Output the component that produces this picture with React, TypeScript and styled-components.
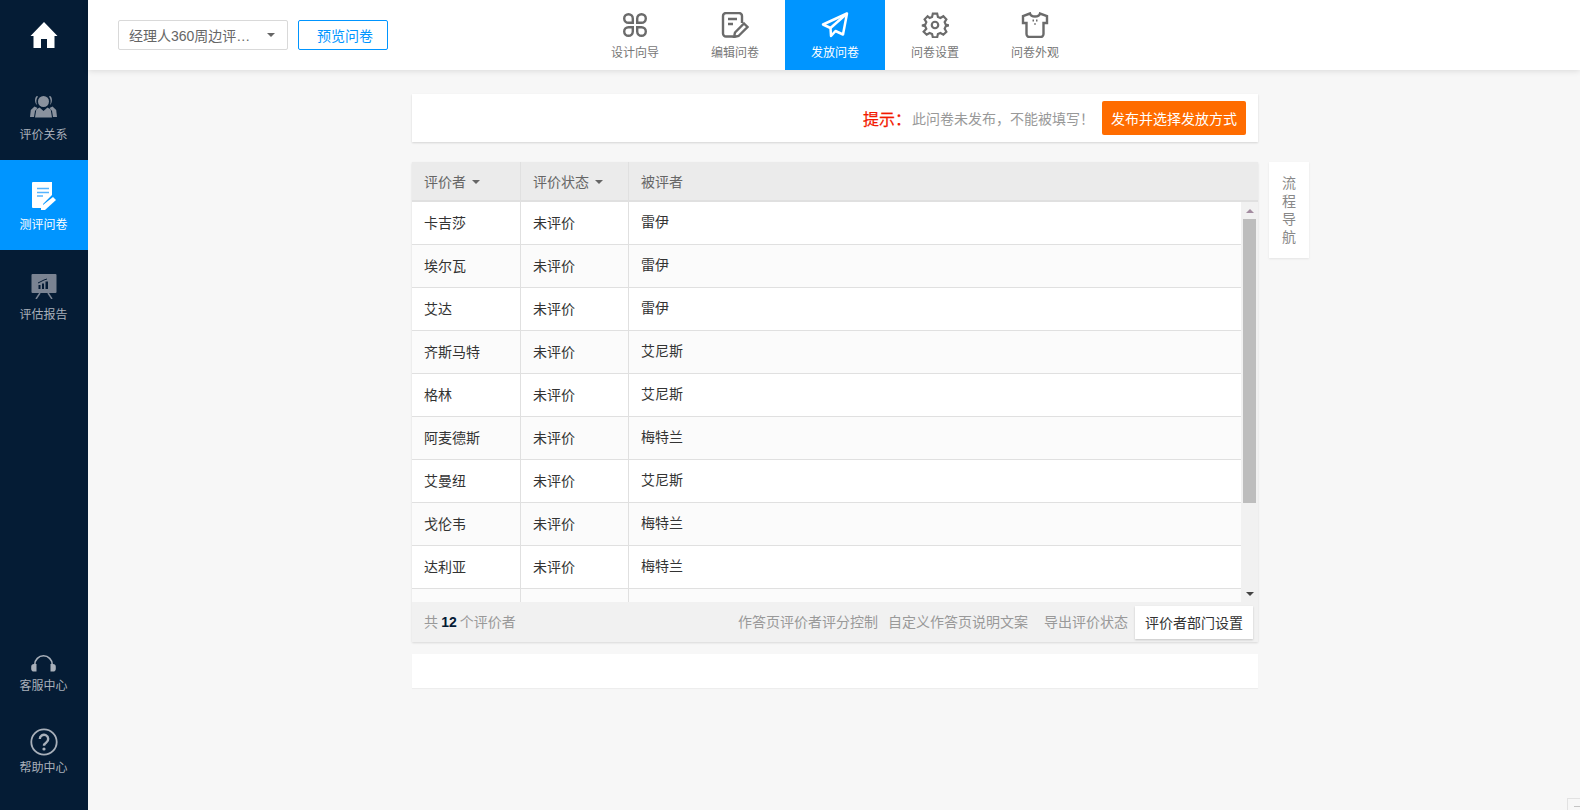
import React from "react";
import styled, { createGlobalStyle } from "styled-components";

const Global = createGlobalStyle`
  html, body { margin: 0; padding: 0; }
  body {
    background: #f7f7f7;
    font-family: "Noto Sans CJK SC", "Liberation Sans", sans-serif;
    overflow: hidden;
  }
  * { box-sizing: border-box; }
`;

const Page = styled.div`
  display: flex;
  width: 1580px;
  height: 810px;
  position: relative;
  overflow: hidden;
`;

const Sidebar = styled.aside`
  width: 88px;
  flex: none;
  height: 100%;
  background: #051c35;
  display: flex;
  flex-direction: column;
`;

const HomeLink = styled.div`
  height: 70px;
  display: flex;
  align-items: center;
  justify-content: center;
`;

const SideItem = styled.div<{ $active?: boolean }>`
  height: 90px;
  display: flex;
  flex-direction: column;
  align-items: center;
  padding: 18px 1px 0 0;
  gap: 1px;
  font-size: 12px;
  line-height: 18px;
  color: ${(p) => (p.$active ? "#fff" : "#a9b0ba")};
  background: ${(p) => (p.$active ? "#0095ff" : "transparent")};
`;

const IconSlot = styled.div`
  height: 36px;
  display: flex;
  align-items: center;
  justify-content: center;
  svg { display: block; }
`;

const SideSpacer = styled.div`
  flex: 1;
`;

const SideBottom = styled.div<{ $height: number; $gap: number }>`
  height: ${(p) => p.$height}px;
  display: flex;
  flex-direction: column;
  align-items: center;
  gap: ${(p) => p.$gap}px;
  padding-right: 1px;
  font-size: 12px;
  line-height: 18px;
  color: #a9b0ba;
  svg { display: block; }
`;

const Main = styled.div`
  flex: 1;
  display: flex;
  flex-direction: column;
  min-width: 0;
`;

const TopBar = styled.header`
  height: 70px;
  flex: none;
  background: #fff;
  box-shadow: 0 1px 6px rgba(0, 0, 0, 0.12);
  display: flex;
  align-items: center;
  padding-left: 30px;
  position: relative;
`;

const SelectBox = styled.div`
  width: 170px;
  height: 30px;
  border: 1px solid #d9d9d9;
  border-radius: 2px;
  display: flex;
  align-items: center;
  padding: 0 12px 0 10px;
  font-family: "Liberation Sans", "Noto Sans CJK SC", sans-serif;
  font-size: 14px;
  color: #666;
  justify-content: space-between;
`;

const Caret = styled.i<{ $color?: string; $size?: number }>`
  display: inline-block;
  width: 0;
  height: 0;
  border-left: ${(p) => p.$size ?? 4}px solid transparent;
  border-right: ${(p) => p.$size ?? 4}px solid transparent;
  border-top: ${(p) => p.$size ?? 4}px solid ${(p) => p.$color ?? "#666"};
`;

const PreviewButton = styled.button`
  width: 90px;
  height: 30px;
  margin-left: 10px;
  border: 1px solid #0095ff;
  border-radius: 2px;
  background: #fff;
  color: #0095ff;
  font: inherit;
  font-size: 14px;
  padding: 0 0 0 4px;
`;

const StepNav = styled.nav`
  display: flex;
  margin-left: 197px;
  height: 70px;
`;

const Step = styled.div<{ $active?: boolean }>`
  width: 100px;
  height: 70px;
  display: flex;
  flex-direction: column;
  align-items: center;
  padding-top: 12px;
  gap: 5px;
  font-size: 12px;
  line-height: 18px;
  color: ${(p) => (p.$active ? "#fff" : "#777")};
  background: ${(p) => (p.$active ? "#0095ff" : "transparent")};
  svg { display: block; }
`;

const Stage = styled.div`
  flex: 1;
  display: flex;
  align-items: flex-start;
  gap: 11px;
  padding: 24px 0 0 324px;
`;

const Column = styled.div`
  width: 846px;
  flex: none;
  display: flex;
  flex-direction: column;
`;

const Notice = styled.div`
  height: 48px;
  background: #fff;
  box-shadow: 0 1px 2px rgba(0, 0, 0, 0.14);
  display: flex;
  align-items: center;
  justify-content: flex-end;
  padding-right: 12px;
`;

const NoticeLabel = styled.span`
  font-size: 16px;
  color: #f21a00;
  -webkit-text-stroke: 0.25px #f21a00;
  margin-right: 1px;
`;

const NoticeText = styled.span`
  font-size: 14px;
  color: #999;
  margin-right: 8px;
`;

const PublishButton = styled.button`
  width: 144px;
  height: 34px;
  border: 0;
  border-radius: 2px;
  background: #ff6c00;
  color: #fff;
  font: inherit;
  font-size: 14px;
  padding: 0;
`;

const TableCard = styled.section`
  margin-top: 20px;
  display: flex;
  flex-direction: column;
  box-shadow: 0 1px 2px rgba(0, 0, 0, 0.12);
`;

const gridCols = "109px 108px 1fr";

const HeadRow = styled.div`
  height: 40px;
  background: #ebebeb;
  display: grid;
  grid-template-columns: ${gridCols};
  border-bottom: 2px solid #e0e0e0;
  font-size: 14px;
  color: #666;
`;

const HeadCell = styled.div`
  display: flex;
  align-items: center;
  gap: 6px;
  padding-left: 12px;
  padding-bottom: 1px;
  border-right: 1px solid #e0e0e0;
  &:last-child { border-right: 0; }
  i { margin-top: 3px; }
`;

const BodyWrap = styled.div`
  height: 400px;
  display: flex;
  background: #fff;
`;

const Rows = styled.div`
  flex: 1;
  overflow: hidden;
`;

const Row = styled.div<{ $alt?: boolean }>`
  height: 43px;
  display: grid;
  grid-template-columns: ${gridCols};
  background: ${(p) => (p.$alt ? "#fbfbfb" : "#fff")};
  border-bottom: 1px solid #e0e0e0;
  font-size: 14px;
  color: #333;
`;

const Cell = styled.div<{ $lift?: boolean }>`
  display: flex;
  align-items: center;
  padding-left: 12px;
  padding-bottom: ${(p) => (p.$lift ? 4 : 2)}px;
  border-right: 1px solid #e0e0e0;
  &:last-child { border-right: 0; }
`;

const ScrollRail = styled.div`
  width: 17px;
  flex: none;
  display: flex;
  flex-direction: column;
  background: #f1f1f1;
`;

const ScrollButton = styled.div`
  height: 17px;
  flex: none;
  display: flex;
  align-items: center;
  justify-content: center;
`;

const ArrowUp = styled.i`
  width: 0;
  height: 0;
  border-left: 4px solid transparent;
  border-right: 4px solid transparent;
  border-bottom: 4px solid #a38ca0;
`;

const ScrollThumb = styled.div`
  height: 284px;
  flex: none;
  margin: 0 2px;
  background: #bdbdbd;
`;

const FooterBar = styled.div`
  height: 40px;
  background: #f1f1f1;
  display: flex;
  align-items: center;
  padding: 0 5px 0 12px;
  font-size: 14px;
  color: #999;
`;

const Total = styled.div`
  flex: 1;
  padding-bottom: 2px;
  b { color: #051b35; font-family: "Liberation Sans", sans-serif; font-weight: 700; }
`;

const FooterLink = styled.span<{ $gap: number }>`
  margin-right: ${(p) => p.$gap}px;
  padding-bottom: 2px;
`;

const DeptButton = styled.button`
  width: 118px;
  height: 33px;
  border: 0;
  background: #fff;
  color: #333;
  font: inherit;
  font-size: 14px;
  padding: 0;
  box-shadow: 0 1px 2px rgba(0, 0, 0, 0.18);
`;

const BlankCard = styled.div`
  margin-top: 12px;
  height: 34px;
  background: #fff;
  box-shadow: 0 1px 1px rgba(0, 0, 0, 0.04);
`;

const FlowNav = styled.aside`
  margin-top: 68px;
  width: 40px;
  height: 96px;
  padding-bottom: 2px;
  background: #fff;
  box-shadow: 0 1px 2px rgba(0, 0, 0, 0.08);
  display: flex;
  flex-direction: column;
  align-items: center;
  justify-content: center;
  font-size: 14px;
  line-height: 18px;
  color: #888;
`;

const CornerWidget = styled.div`
  position: absolute;
  right: -1px;
  bottom: -6px;
  width: 14px;
  height: 18px;
  background: #f7f7f7;
  border: 1px solid #e2e2e2;
  &::after {
    content: "";
    position: absolute;
    left: 6px;
    top: 7px;
    width: 8px;
    height: 3px;
    border-top: 1px solid #c4c4c4;
    border-bottom: 1px solid #c4c4c4;
  }
`;

const IconHome = () => (
  <svg width="28" height="28" viewBox="0 0 28 28">
    <path fill="#fff" d="M14 1 0.500 15h3v12H11v-9h6v9h7.500V15h3z" />
  </svg>
);
const IconPeople = () => (
  <svg width="27" height="23" viewBox="0 0 27 23" fill="#8a929e">
    <circle cx="13.500" cy="6.500" r="5.500" />
    <path d="M7 1C4.500 2 4.300 7.500 7 10 6 7 6 4 8 1.500zM20 1c2.500 1 2.700 6.500 0 9 1-3 1-6-1-8.500z" />
    <path d="M4.500 11.500.800 15 0 22h4l1-6 2.500-3zM22.500 11.500l3.700 3.500.8 7h-4l-1-6-2.500-3z" />
    <path d="M9.500 12.500l4 3.500 4-3.500 3.200 2 1.300 8H5l1.300-8z" />
  </svg>
);
const IconDoc = () => (
  <svg width="24" height="28" viewBox="0 0 24 28">
    <path fill="#fff" d="M1 0h19v13l-9 9v4H1a1 1 0 0 1-1-1V1a1 1 0 0 1 1-1z" />
    <path fill="#fff" d="M21 15l3 3-11 10h-4v-3.500z" />
    <path stroke="#55b4ff" strokeWidth="1.500" d="M5 6.500h12M5 10.500h12M5 14h6" />
  </svg>
);
const IconBoard = () => (
  <svg width="26" height="25" viewBox="0 0 26 25">
    <rect x="0.500" y="0" width="25" height="19" rx="1" fill="#7a8392" />
    <path stroke="#7a8392" strokeWidth="1.500" fill="none" d="M9 19l-4 6M17 19l4 6" />
    <path fill="#051b35" d="M7.500 11h2v4h-2zM11 9.500h2V15h-2zM14.500 7.500h2.500V15h-2.500z" />
    <path stroke="#051b35" d="M7 9l6-3 3-1" fill="none" />
  </svg>
);
const IconHeadset = () => (
  <svg width="25" height="17" viewBox="0 0 25 17">
    <path fill="none" stroke="#a9b0ba" strokeWidth="1.600" d="M3.800 11V9.500a8.700 8.700 0 0 1 17.400 0V11" />
    <path fill="#a9b0ba" d="M5.500 9v7.500h-2.500A2.800 2.800 0 0 1 .200 13.700v-2A2.800 2.800 0 0 1 3 9zM19.500 9v7.500h2.500a2.800 2.800 0 0 0 2.800-2.800v-2A2.800 2.800 0 0 0 22 9z" />
  </svg>
);
const IconHelp = () => (
  <svg width="28" height="28" viewBox="0 0 28 28">
    <circle cx="14" cy="14" r="12.700" fill="none" stroke="#a9b0ba" strokeWidth="1.800" />
    <path fill="none" stroke="#a9b0ba" strokeWidth="2.400" d="M9.800 11a4.200 4.200 0 1 1 6.500 3.500c-1.500 1-2.300 1.600-2.300 3.200" />
    <circle cx="14" cy="21" r="1.600" fill="#a9b0ba" />
  </svg>
);

const stepStroke = { fill: "none", stroke: "#6b6b6b", strokeWidth: 2.4 } as const;

const StepGrid = () => (
  <svg width="28" height="26" viewBox="0 0 28 26" {...stepStroke}>
    <path d="M7.500 2.200a4.300 4.300 0 0 1 4.300 4.300v4.300H7.500a4.300 4.300 0 0 1 0-8.600z" />
    <path d="M20.500 2.200a4.300 4.300 0 0 1 0 8.600h-4.300V6.500a4.300 4.300 0 0 1 4.300-4.300z" />
    <path d="M7.500 15.200h4.300v4.300a4.300 4.300 0 1 1-4.300-4.300z" />
    <path d="M16.200 15.200h4.300a4.300 4.300 0 1 1-4.300 4.300z" />
  </svg>
);
const StepEdit = () => (
  <svg width="28" height="26" viewBox="0 0 28 26" {...stepStroke}>
    <path d="M12 24.500H5a3 3 0 0 1-3-3V4a3 3 0 0 1 3-3h13a3 3 0 0 1 3 3v7" />
    <path d="M7 7h9M7 12h5" />
    <path d="M23 11.500l3.500 3.500-9 9-4.500 1 1-4.500z" />
  </svg>
);
const StepPlane = () => (
  <svg width="28" height="26" viewBox="0 0 28 26" fill="none" stroke="#fff" strokeWidth="2.500" strokeLinejoin="round">
    <path d="M26 1.500 2 12.500l7.500 3.500.5 8 4.500-5 7.500 3.500z" />
    <path d="M26 1.500 9.500 16" />
  </svg>
);
const StepGear = () => (
  <svg width="28" height="26" viewBox="0 0 24 24" {...stepStroke} strokeWidth={2}>
    <path d="M10 1.500h4l.7 3 2.300 1 2.700-1.600 2.800 2.900-1.600 2.600 1 2.300 3 .7v0l-3 .8-1 2.300 1.600 2.700-2.800 2.800-2.700-1.600-2.300 1-.7 3h-4l-.7-3-2.300-1-2.700 1.600-2.800-2.800L4 15.500l-1-2.300-3-.8 3-.7 1-2.300-1.600-2.600 2.800-2.900L7 5.500l2.300-1z" />
    <circle cx="12" cy="12" r="3" />
  </svg>
);
const StepShirt = () => (
  <svg width="28" height="26" viewBox="0 0 28 26" {...stepStroke}>
    <path d="M9 1.500 2 4v7h3.500v11a3 3 0 0 0 3 3h11a3 3 0 0 0 3-3V11H26V4l-7-2.500c-.5 2-2.500 3-5 3s-4.500-1-5-3z" />
    <path d="M11.500 8.500h1.500M15 8.500h1.500M13.400 12h1.200" strokeWidth="1.800" />
  </svg>
);

const rows: [string, string][] = [
  ["卡吉莎", "雷伊"],
  ["埃尔瓦", "雷伊"],
  ["艾达", "雷伊"],
  ["齐斯马特", "艾尼斯"],
  ["格林", "艾尼斯"],
  ["阿麦德斯", "梅特兰"],
  ["艾曼纽", "艾尼斯"],
  ["戈伦韦", "梅特兰"],
  ["达利亚", "梅特兰"],
  ["", ""],
];

export default function App() {
  return (
    <Page>
      <Global />
      <Sidebar>
        <HomeLink><IconHome /></HomeLink>
        <SideItem><IconSlot><IconPeople /></IconSlot>评价关系</SideItem>
        <SideItem $active><IconSlot><IconDoc /></IconSlot>测评问卷</SideItem>
        <SideItem><IconSlot><IconBoard /></IconSlot>评估报告</SideItem>
        <SideSpacer />
        <SideBottom $height={73} $gap={4}><IconHeadset />客服中心</SideBottom>
        <SideBottom $height={82} $gap={2}><IconHelp />帮助中心</SideBottom>
      </Sidebar>
      <Main>
        <TopBar>
          <SelectBox>经理人360周边评…<Caret /></SelectBox>
          <PreviewButton>预览问卷</PreviewButton>
          <StepNav>
            <Step><StepGrid />设计向导</Step>
            <Step><StepEdit />编辑问卷</Step>
            <Step $active><StepPlane />发放问卷</Step>
            <Step><StepGear />问卷设置</Step>
            <Step><StepShirt />问卷外观</Step>
          </StepNav>
        </TopBar>
        <Stage>
          <Column>
            <Notice>
              <NoticeLabel>提示：</NoticeLabel>
              <NoticeText>此问卷未发布，不能被填写！</NoticeText>
              <PublishButton>发布并选择发放方式</PublishButton>
            </Notice>
            <TableCard>
              <HeadRow>
                <HeadCell>评价者<Caret /></HeadCell>
                <HeadCell>评价状态<Caret /></HeadCell>
                <HeadCell>被评者</HeadCell>
              </HeadRow>
              <BodyWrap>
                <Rows>
                  {rows.map((r, i) => (
                    <Row key={i} $alt={i % 2 === 1}>
                      <Cell>{r[0]}</Cell>
                      <Cell>{r[0] ? "未评价" : ""}</Cell>
                      <Cell $lift>{r[1]}</Cell>
                    </Row>
                  ))}
                </Rows>
                <ScrollRail>
                  <ScrollButton><ArrowUp /></ScrollButton>
                  <ScrollThumb />
                  <SideSpacer />
                  <ScrollButton><Caret $color="#444" /></ScrollButton>
                </ScrollRail>
              </BodyWrap>
              <FooterBar>
                <Total>共 <b>12</b> 个评价者</Total>
                <FooterLink $gap={10}>作答页评价者评分控制</FooterLink>
                <FooterLink $gap={16}>自定义作答页说明文案</FooterLink>
                <FooterLink $gap={7}>导出评价状态</FooterLink>
                <DeptButton>评价者部门设置</DeptButton>
              </FooterBar>
            </TableCard>
            <BlankCard />
          </Column>
          <FlowNav>
            <span>流</span>
            <span>程</span>
            <span>导</span>
            <span>航</span>
          </FlowNav>
        </Stage>
      </Main>
      <CornerWidget />
    </Page>
  );
}
